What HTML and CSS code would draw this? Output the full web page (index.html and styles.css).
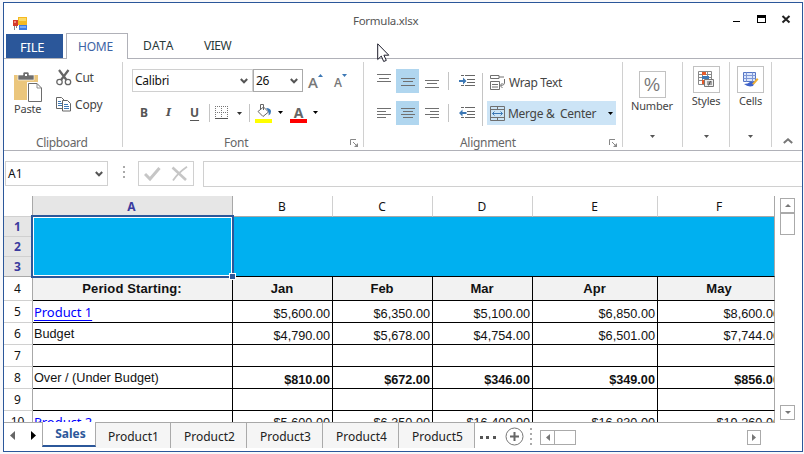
FILE: index.html
```html
<!DOCTYPE html>
<html lang="en">
<head>
<meta charset="utf-8">
<title>Formula.xlsx</title>
<link rel="stylesheet" href="styles.css">
</head>
<body>
<div class="window">
  <header class="titlebar">
    <svg class="app-icon" width="15" height="14" viewBox="0 0 15 14"><path d="M1.5 9v4M3.500 9v2" stroke="#888"/><rect x="5" y="0" width="9" height="8" fill="#f5b921"/><rect x="6" y="1" width="7" height="3" fill="#fbd966"/><rect x="0" y="3" width="5" height="6" fill="#d33a2c"/><rect x="1" y="4" width="2" height="2" fill="#f08a7c"/><rect x="6" y="8" width="8" height="5" fill="#3d7be0"/><rect x="7" y="9" width="6" height="2" fill="#79aaf5"/></svg>
    <span class="title">Formula.xlsx</span>
    <svg class="win-buttons" width="60" height="12" viewBox="0 0 60 12" shape-rendering="crispEdges"><path d="M0 6h7v1H0z"/><path d="M24 0h9v8h-9zM25 3v4h7V3z" fill-rule="evenodd"/><path d="M49.500 1l7 6.500M56.500 1l-7 6.500" stroke="#222" stroke-width="2" fill="none" shape-rendering="auto"/></svg>
  </header>
  <nav class="tabs"><span class="file">FILE</span><span class="tab active">HOME</span><span class="tab data">DATA</span><span class="tab view">VIEW</span></nav>

  <section class="ribbon">
    <div class="group clipboard">
      <div class="body">
        <div class="paste">
          <svg width="29" height="31" viewBox="0 0 29 31"><rect x="0" y="3" width="24" height="25" fill="#ebc67c"/><path d="M4 3h5V1.500Q9 0 10.500 0h3Q15 0 15 1.500V3h5v5H4z" fill="#6d6d6d" stroke="#fff" stroke-width=".6"/><rect x="11" y="2" width="2" height="2" fill="#fff"/><path d="M13 10h10.500L29 15.500V31H13z" fill="#fff"/><path d="M14.500 11.500H23l4.500 4.500v13.500h-13z" fill="#fff" stroke="#6d6d6d"/><path d="M23 11.500V16h4.500" fill="none" stroke="#777" stroke-width=".8"/></svg>
          <span>Paste</span>
        </div>
        <div class="cutcopy">
          <div><svg width="16" height="17" viewBox="0 0 16 17" fill="none" stroke="#666"><path d="M3 1l7.500 10M12.500 1L5 11" stroke-width="2.200"/><circle cx="3.500" cy="13" r="2.700" stroke-width="1.300"/><circle cx="12" cy="13" r="2.700" stroke-width="1.300"/></svg><span>Cut</span></div>
          <div><svg width="16" height="15" viewBox="0 0 16 15" fill="#fff" stroke="#666"><path d="M.5.5h5l3 3v8h-8z"/><path d="M2 4.500h3M2 6.500h4M2 8.500h4" stroke="#3c78b5"/><path d="M6.500 3.500h5l3 3v7.500h-8z"/><path d="M8 7.500h4M8 9.500h5M8 11.500h5" stroke="#3c78b5"/></svg><span>Copy</span></div>
        </div>
      </div>
      <div class="caption">Clipboard</div>
    </div>

    <div class="group font">
      <div class="body">
        <div class="row1">
          <div class="select family"><span>Calibri</span><svg width="8" height="6" viewBox="0 0 8 6"><path d="M.8 1L4 4.300 7.200 1" fill="none" stroke="#555" stroke-width="2"/></svg></div>
          <div class="select size"><span>26</span><svg width="8" height="6" viewBox="0 0 8 6"><path d="M.8 1L4 4.300 7.200 1" fill="none" stroke="#555" stroke-width="2"/></svg></div>
          <span class="grow">A</span><svg class="tri-up" width="5" height="3"><path d="M0 3L2.500 0 5 3z" fill="#3c78b5"/></svg>
          <span class="shrink">A</span><svg class="tri-dn" width="5" height="3"><path d="M0 0h5L2.500 3z" fill="#3c78b5"/></svg>
        </div>
        <div class="row2">
          <b class="bold">B</b><b class="ital">I</b><b class="under">U</b>
          <i class="sep"></i>
          <svg class="borders" width="14" height="14" viewBox="0 0 14 14" shape-rendering="crispEdges"><path d="M0 .5h14M0 6.500h14M.5 0v12M6.500 0v12M12.500 0v12" stroke="#777" stroke-dasharray="1 1"/><path d="M0 12.500h13" stroke="#555"/></svg>
          <svg class="drop d1" width="5" height="3"><path d="M0 0h5L2.500 3z" fill="#333"/></svg>
          <i class="sep s2"></i>
          <svg class="bucket" width="17" height="19" viewBox="0 0 17 19"><path d="M3 7.500L8.500 3l5 5L8 12.500z" fill="#fff" stroke="#666"/><path d="M5.500 6V.5h3V6" fill="none" stroke="#666"/><path d="M11 4q5 0 5 3.500 0 3-2.500 4 1-3.500-2.500-7.500z" fill="#3c78b5"/><path d="M0 15h17v4H0z" fill="#ff0"/></svg>
          <svg class="drop d2" width="5" height="3"><path d="M0 0h5L2.500 3z"/></svg>
          <span class="fontcolor">A</span>
          <svg class="drop d3" width="5" height="3"><path d="M0 0h5L2.500 3z"/></svg>
        </div>
      </div>
      <div class="caption">Font<svg class="launch" width="9" height="9" viewBox="0 0 9 9"><path d="M.5 6V.5H6" fill="none" stroke="#888"/><path d="M3 3l3 3" stroke="#888"/><path d="M8 4v4H4z" fill="#888"/></svg></div>
    </div>

    <div class="group alignment">
      <div class="body">
        <div class="aligns">
          <svg width="23" height="24" viewBox="0 0 23 24" shape-rendering="crispEdges"><path d="M5 5.500h14M7 9.500h10M5 12.500h14" stroke="#707070"/></svg>
          <svg class="on" width="23" height="24" viewBox="0 0 23 24" shape-rendering="crispEdges"><path d="M5 9.500h14M7 12.500h10M5 16.500h14" stroke="#707070"/></svg>
          <svg width="23" height="24" viewBox="0 0 23 24" shape-rendering="crispEdges"><path d="M5 11.500h14M7 14.500h10M5 18.500h14" stroke="#707070"/></svg>
          <i class="sep"></i>
          <svg class="indent" width="16" height="12" viewBox="0 0 16 12"><path d="M2 .5h3m1 0h10M8 4.500h8M8 7.500h8M2 10.500h3m1 0h10" stroke="#666"/><path d="M0 5h4V2.500L7.500 6 4 9.500V7H0z" fill="#3c78b5"/></svg>
          <svg width="23" height="24" viewBox="0 0 23 24" shape-rendering="crispEdges"><path d="M5 7.500h14M5 10.500h9M5 13.500h14M5 16.500h9" stroke="#707070"/></svg>
          <svg class="on" width="23" height="24" viewBox="0 0 23 24" shape-rendering="crispEdges"><path d="M5 7.500h14M7 10.500h10M5 13.500h14M7 16.500h10" stroke="#707070"/></svg>
          <svg width="23" height="24" viewBox="0 0 23 24" shape-rendering="crispEdges"><path d="M5 7.500h14M10 10.500h9M5 13.500h14M10 16.500h9" stroke="#707070"/></svg>
          <i class="sep"></i>
          <svg class="indent" width="16" height="12" viewBox="0 0 16 12"><path d="M2 .5h3m1 0h10M8 4.500h8M8 7.500h8M2 10.500h3m1 0h10" stroke="#666"/><path d="M7.500 5h-4V2.500L0 6l3.500 3.500V7h4z" fill="#3c78b5"/></svg>
        </div>
        <i class="sep tall"></i>
        <div class="merge-col">
          <div class="wrap"><svg width="16" height="16" viewBox="0 0 16 16" fill="none" stroke="#707070"><path d="M.5.500h8.500v3H.5zM9 2h5M.5 6.500h9v8H.5zM2 9.500h6M2 12h6"/><path d="M14.500 4v4q0 2.500-4 2.500M12.500 8l-2.500 2.500 2.500 2.500"/></svg><span>Wrap Text</span></div>
          <div class="merge"><svg width="15" height="15" viewBox="0 0 15 15" fill="none" stroke="#707070"><path d="M.5.500h14v14H.5zM.5 3.500h14M.5 11.500h14M7.500 0v3.500M7.500 11.500V15"/><path d="M2.500 7.500h10M4.500 5.500l-2 2 2 2M10.500 5.500l2 2-2 2" stroke="#3c78b5"/></svg><span>Merge &amp;&nbsp; Center</span><svg class="drop" width="5" height="3"><path d="M0 0h5L2.500 3z"/></svg></div>
        </div>
      </div>
      <div class="caption">Alignment<svg class="launch" width="9" height="9" viewBox="0 0 9 9"><path d="M.5 6V.5H6" fill="none" stroke="#888"/><path d="M3 3l3 3" stroke="#888"/><path d="M8 4v4H4z" fill="#888"/></svg></div>
    </div>

    <div class="group compact number"><div class="tile">%</div><span>Number</span><svg class="drop" width="5" height="3"><path d="M0 0h5L2.500 3z" fill="#555"/></svg></div>
    <div class="group compact styles"><div class="tile"><svg width="17" height="17" viewBox="0 0 17 17"><path d="M.5.5h13v13H.5zM.5 3.500h13M.5 6.500h13M.5 9.500h13M4.500.5v13M9.500.5v13" fill="#fff" stroke="#888"/><path d="M4 1h4v3H4zM4 9h3v4H4z" fill="#e65a28"/><path d="M4 5h7v3H4z" fill="#3c78b5"/><path d="M6.500 8.500h9v7h-9z" fill="#eee" stroke="#777"/><path d="M9 11h5M9 13h5M12.500 10l-2 4.500" stroke="#444" stroke-width=".9"/></svg></div><span>Styles</span><svg class="drop" width="5" height="3"><path d="M0 0h5L2.500 3z" fill="#555"/></svg></div>
    <div class="group compact cells"><div class="tile"><svg width="17" height="17" viewBox="0 0 17 17"><path d="M1.500 1.500h12v9h-12z" fill="#dbe6fc" stroke="#5574c4"/><path d="M1.500 4.500h12M1.500 7.500h12M4.500 1.500v9M10.500 1.500v9" stroke="#7f98d6"/><path d="M2 13q4 0 6-2h5l-2 4q-5 1.500-9-2z" fill="#3f63ca"/><path d="M10 13l5-6 1.500 1.500-4.500 5z" fill="#f0b030"/></svg></div><span>Cells</span><svg class="drop" width="5" height="3"><path d="M0 0h5L2.500 3z" fill="#555"/></svg></div>
    <svg class="collapse" width="10" height="6" viewBox="0 0 10 6"><path d="M.8 5L5 1.300 9.200 5" fill="none" stroke="#777" stroke-width="2"/></svg>
  </section>

  <section class="formula-bar">
    <div class="namebox"><span>A1</span><svg width="8" height="6" viewBox="0 0 8 6"><path d="M.8 1L4 4.300 7.200 1" fill="none" stroke="#555" stroke-width="2"/></svg></div>
    <svg class="dots" width="2" height="12" shape-rendering="crispEdges"><path d="M0 0h2v2H0zM0 5h2v2H0zM0 10h2v2H0z" fill="#aaa"/></svg>
    <div class="confirm"><svg width="45" height="16" viewBox="0 0 45 16" fill="none" stroke="#c6c6c6"><path d="M1 8l5 5L15.500 2" stroke-width="3"/><path d="M28.500 1.500L42 14" stroke-width="2.600"/><path d="M43 .8Q34 7 29 14.500" stroke-width="1.800"/></svg></div>
    <div class="formula"></div>
  </section>

  <main class="sheet-area">
    <div class="sheet">
      <div class="corner"></div><div class="ch sel">A</div><div class="ch">B</div><div class="ch">C</div><div class="ch">D</div><div class="ch">E</div><div class="ch last">F</div>
      <div class="rh sel">1</div><div class="banner"><div class="selection"><i class="handle"></i></div></div>
      <div class="rh sel">2</div>
      <div class="rh sel r3">3</div>
      <div class="rh">4</div><div class="c h period">Period Starting:</div><div class="c h">Jan</div><div class="c h">Feb</div><div class="c h">Mar</div><div class="c h">Apr</div><div class="c h last">May</div>
      <div class="rh">5</div><div class="c"><a>Product 1</a></div><div class="c n">$5,600.00</div><div class="c n">$6,350.00</div><div class="c n">$5,100.00</div><div class="c n">$6,850.00</div><div class="c n last"><span>$8,600.00</span></div>
      <div class="rh">6</div><div class="c">Budget</div><div class="c n">$4,790.00</div><div class="c n">$5,678.00</div><div class="c n">$4,754.00</div><div class="c n">$6,501.00</div><div class="c n last"><span>$7,744.00</span></div>
      <div class="rh">7</div><div class="c"></div><div class="c"></div><div class="c"></div><div class="c"></div><div class="c"></div><div class="c last"></div>
      <div class="rh">8</div><div class="c">Over / (Under Budget)</div><div class="c n b">$810.00</div><div class="c n b">$672.00</div><div class="c n b">$346.00</div><div class="c n b">$349.00</div><div class="c n b last"><span>$856.00</span></div>
      <div class="rh">9</div><div class="c"></div><div class="c"></div><div class="c"></div><div class="c"></div><div class="c"></div><div class="c last"></div>
      <div class="rh">10</div><div class="c"><a>Product 2</a></div><div class="c n r10">$5,600.00</div><div class="c n r10">$6,350.00</div><div class="c n r10">$16,400.00</div><div class="c n r10">$16,830.00</div><div class="c n r10 last"><span>$19,260.00</span></div>
    </div>
    <div class="vscroll">
      <div class="sbtn"><svg width="6" height="3"><path d="M0 3L3 0 6 3z" fill="#777"/></svg></div>
      <div class="vthumb"></div>
      <div class="sbtn down"><svg width="6" height="3"><path d="M0 0h6L3 3z" fill="#777"/></svg></div>
    </div>
  </main>

  <footer class="bottom">
    <div class="nav"><svg width="5" height="9"><path d="M5 0v9L0 4.500z" fill="#666"/></svg><svg width="5" height="9"><path d="M0 0v9l5-4.500z"/></svg></div>
    <div class="stab current">Sales</div><div class="stab">Product1</div><div class="stab">Product2</div><div class="stab">Product3</div><div class="stab">Product4</div><div class="stab">Product5</div>
    <svg class="more" width="16" height="3" shape-rendering="crispEdges"><path d="M0 0h3v3H0zM6 0h3v3H6zM13 0h3v3h-3z" fill="#555"/></svg>
    <svg class="plus" width="19" height="19" viewBox="0 0 19 19"><circle cx="9.500" cy="9.500" r="8.500" fill="#fff" stroke="#777"/><path d="M5 9.500h9M9.500 5v9" stroke="#666" stroke-width="2"/></svg>
    <svg class="grip" width="2" height="17" shape-rendering="crispEdges"><path d="M0 0h2v2H0zM0 5h2v2H0zM0 10h2v2H0zM0 15h2v2H0z" fill="#aaa"/></svg>
    <div class="sbtn"><svg width="4" height="7"><path d="M4 0v7L0 3.500z" fill="#777"/></svg></div>
    <div class="hthumb"></div>
    <div class="sbtn right"><svg width="4" height="7"><path d="M0 0v7l4-3.500z" fill="#777"/></svg></div>
  </footer>
</div>
<svg class="cursor" width="13" height="20" viewBox="0 0 13 20"><path d="M.7.8v15.700l3.600-3.400 2.400 5.400 2.600-1.100-2.400-5.200h4.900z" fill="#fff" stroke="#1d1d2b"/></svg>
</body>
</html>
```

FILE: styles.css
```css
* { box-sizing: border-box; }
body { margin: 0; padding: 2px 0 0 3px; height: 454px; overflow: hidden; background: #f8f8fa; font: 12px/16px "Noto Sans", "Open Sans", sans-serif; color: #444; }
svg { display: block; flex: none; }
span { white-space: nowrap; }
.window { width: 800px; height: 450px; border: 1px solid #2b579a; background: #fff; display: flex; flex-direction: column; }

.titlebar { height: 30px; display: flex; flex: none; }
.app-icon { margin: 14px 0 0 9px; }
.title { margin: 10px 0 0 325px; width: 67px; font-size: 11.5px; letter-spacing: -.28px; color: #555; }
.win-buttons { margin: 12px 0 0 313px; }
.tabs { height: 26px; flex: none; display: flex; border-bottom: 1px solid #b0b1b8; }
.file { width: 57px; height: 24px; margin: 1px 3px 0 2px; background: #2b579a; color: #fff; font-size: 13px; line-height: 27px; padding-left: 14px; letter-spacing: -.2px; }
.tab { height: 26px; line-height: 25px; color: #2a3a3a; }
.tab.active { width: 62px; border: 1px solid #b0b1b8; border-bottom: 0; background: #fff; color: #3c64a5; padding-left: 11px; letter-spacing: -.2px; }
.data { margin-left: 15px; width: 61px; letter-spacing: .5px; }
.view { letter-spacing: -.5px; }

.ribbon { height: 92px; flex: none; border-bottom: 1px solid #b0b1b8; display: flex; }
.group { height: 85px; margin-top: 3px; border-right: 1px solid #d0d0d0; }
.body { height: 74px; display: flex; }
.caption { line-height: 14px; height: 14px; color: #666; display: flex; letter-spacing: -.2px; }
.sep { width: 1px; height: 18px; background: #c4c4c4; flex: none; }
.clipboard { width: 119px; }
.clipboard .caption { padding-left: 32px; letter-spacing: -.35px; }
.paste { margin: 10px 0 0 10px; width: 42px; font-size: 11px; }
.paste span { display: block; line-height: 14px; margin-top: -1px; letter-spacing: -.2px; }
.cutcopy div { display: flex; height: 27px; align-items: center; }
.cutcopy { padding-top: 2px; }
.cutcopy span { margin-left: 3px; letter-spacing: -.2px; }

.font { width: 241px; }
.font .body { flex-direction: column; }
.row1 { display: flex; margin: 7px 0 0 9px; height: 23px; }
.select { border: 1px solid #d0d0d0; display: flex; justify-content: space-between; align-items: center; padding: 0 4px 0 2px; color: #111; letter-spacing: -.25px; }
.family { width: 121px; }
.size { width: 50px; border-color: #aaa; }
.grow { margin: 4px 0 0 5px; width: 9px; font: 600 15px/18px "Open Sans", sans-serif; color: #777; }
.tri-up { margin: 5px 0 0 1px; }
.shrink { margin: 6px 0 0 11px; width: 8px; font: 600 12px/16px "Open Sans", sans-serif; color: #777; }
.tri-dn { margin: 5px 0 0 0; }
.row2 { display: flex; align-items: center; height: 20px; margin: 11px 0 0 17px; color: #555; }
.row2 b { width: 25px; }
.row2 .ital { font-style: italic; font-family: "DejaVu Serif", serif; font-size: 11px; padding-left: 1px; }
.row2 .under { width: 19px; text-decoration: underline; text-underline-offset: 3px; }
.borders { margin-left: 5px; }
.d1 { margin-left: 8px; }
.s2 { margin-left: 7px; }
.bucket { margin: 0 0 0 5px; }
.d2 { margin-left: 6px; }
.d2, .d3 { margin-top: -2px; }
.fontcolor { margin: 0 0 0 7px; width: 17px; height: 19px; border-bottom: 4px solid red; font: 700 14px/15px "Noto Sans", sans-serif; color: #666; text-align: center; padding-top: 1px; }
.d3 { margin-left: 6px; }
.font .caption { padding-left: 101px; }
.launch { margin: 3px 0 0 auto; }
.font .launch { margin-right: 4px; }

.alignment { width: 259px; }
.aligns { width: 118px; display: grid; grid-template-columns: 24px 24px 24px 16px 16px; grid-template-rows: 24px 24px; row-gap: 8px; margin-top: 7px; padding-left: 8px; align-items: center; height: 56px; }
.aligns .sep { margin-left: 4px; }
.indent { margin-left: -1px; }
.on { background: #b0d6ef; }
.tall { height: 53px; margin-top: 11px; }
.merge-col { margin: 7px 0 0 4px; }
.wrap { height: 27px; margin-bottom: 5px; padding-left: 3px; display: flex; align-items: center; }
.wrap span { margin-left: 3px; letter-spacing: -.35px; }
.merge { width: 129px; height: 24px; background: #cce4f6; display: flex; align-items: center; padding-left: 3px; }
.merge span { margin: 1px 0 0 3px; width: 100px; letter-spacing: -.3px; }
.alignment .caption { padding-left: 96px; letter-spacing: -.3px; }
.alignment .launch { margin-right: 4px; }

.compact { display: flex; flex-direction: column; align-items: center; }
.compact span { font-size: 11px; line-height: 16px; height: 27px; letter-spacing: -.2px; }
.tile { width: 27px; height: 27px; border: 1px solid #c2c2c2; display: flex; justify-content: center; align-items: center; margin-top: 4px; font-size: 18px; color: #777; flex: none; }
.number { width: 60px; padding-right: 1px; }
.number .tile { margin-top: 9px; font-family: "Liberation Sans", sans-serif; }
.styles { width: 47px; }
.cells { width: 42px; }
.compact .drop { margin-top: 15px; }
.number .drop { margin-top: 10px; }
.collapse { margin: 79px 0 0 11px; }

.formula-bar { height: 45px; flex: none; display: flex; padding-top: 10px; }
.namebox { width: 103px; height: 25px; margin-left: 1px; border: 1px solid #d0d0d0; display: flex; align-items: center; justify-content: space-between; padding: 0 4px 0 2px; color: #111; }
.dots { margin: 5px 0 0 15px; }
.confirm { width: 56px; height: 25px; margin-left: 13px; border: 1px solid #d0d0d0; padding: 4px 0 0 5px; }
.formula { flex: 1; height: 26px; margin-left: 9px; border: 1px solid #d0d0d0; border-right: 0; }

.sheet-area { height: 227px; flex: none; display: flex; }
.sheet { width: 771px; height: 227px; overflow: hidden; border-bottom: 1px solid #a8a8a8; display: grid; grid-template-columns: 29px 200px 100px 100px 100px 125px 117px; grid-template-rows: 21px 20px 20px 20px 24px repeat(6, 22px); }
.corner { border-right: 1px solid #a8a8a8; border-bottom: 1px solid #d0d0d0; }
.ch { border-right: 1px solid #d0d0d0; border-bottom: 1px solid #a8a8a8; text-align: center; line-height: 21px; color: #111; padding-right: 1px; }
.ch.sel { background: #e6e6e6; border-right-color: #a8a8a8; padding-right: 2px; }
.sel { color: #3a3a9e !important; font-weight: 700; }
.ch.last { padding-left: 6px; padding-right: 0; }
.ch.last, .c.last { border-right-color: #a8a8a8; }
.rh { border-right: 1px solid #a8a8a8; border-bottom: 1px solid #d0d0d0; display: flex; align-items: center; justify-content: center; color: #111; padding-right: 1px; }
.rh.sel { background: #e6e6e6; }
.rh.r3 { border-bottom-color: #a8a8a8; }
.banner { grid-column: 2 / 8; grid-row: 2 / 5; background: #00b0f0; border-right: 1px solid #a8a8a8; border-bottom: 1px solid #000; position: relative; }
.selection { position: absolute; left: -2px; top: -2px; width: 203px; height: 63px; border: 2px solid #2b579a; box-shadow: inset 0 0 0 1px #fff; }
.handle { position: absolute; right: -4px; bottom: -4px; width: 7px; height: 7px; background: #2b579a; border: 1px solid #fff; }
.c { border-right: 1px solid #000; border-bottom: 1px solid #000; font: 12.7px/20px "Liberation Sans", sans-serif; color: #111; padding: 1px 0 0 1px; overflow: hidden; white-space: nowrap; }
.h { background: #f2f2f2; font-weight: 700; text-align: center; line-height: 22px; font-size: 13px; padding: 1px 1px 0 0; }
.h.period { letter-spacing: .12px; }
.h.last { padding: 1px 0 0 6px; }
.n { text-align: right; padding: 3px 2px 0 0; }
.r10 { padding-top: 2px; }
.n.last span { display: block; width: 122px; }
.b { font-weight: 700; }
.c a { position: relative; top: 1px; font: 13px/18px "Noto Sans", sans-serif; letter-spacing: -.05px; color: #00f; text-decoration: underline; text-underline-offset: 3px; }
.vscroll { width: 15px; margin-left: 5px; padding-top: 2px; display: flex; flex-direction: column; }
.sbtn { width: 15px; height: 15px; border: 1px solid #aaa; display: flex; align-items: center; justify-content: center; flex: none; }
.vthumb { height: 22px; border: 1px solid #aaa; }
.down { margin-top: 170px; }

.bottom { height: 28px; display: flex; }
.nav { width: 38px; display: flex; gap: 16px; padding: 8px 0 0 6px; }
.stab { width: 76px; height: 25px; background: #f5f5f5; color: #222; line-height: 27px; text-align: center; padding-left: 2px; position: relative; border-right: 1px solid #aaa; }
.stab.current { width: 54px; height: 25px; margin-top: -1px; padding-left: 3px; background: #fff; color: #2b579a; font-weight: 700; border: 1px solid #aaa; border-width: 0 1px 2px; border-bottom-color: #2b579a; line-height: 23px; }
.current + .stab { width: 75px; padding-left: 1px; }
.more { margin: 13px 0 0 5px; }
.plus { margin: 4px 0 0 9px; }
.grip { margin: 5px 0 0 6px; }
.bottom .sbtn { margin: 7px 0 0 8px; }
.hthumb { width: 22px; height: 15px; margin: 7px 0 0 -1px; border: 1px solid #aaa; }
.bottom .right { margin-left: 171px; width: 14px; }
.cursor { position: absolute; left: 377px; top: 43px; }
```
